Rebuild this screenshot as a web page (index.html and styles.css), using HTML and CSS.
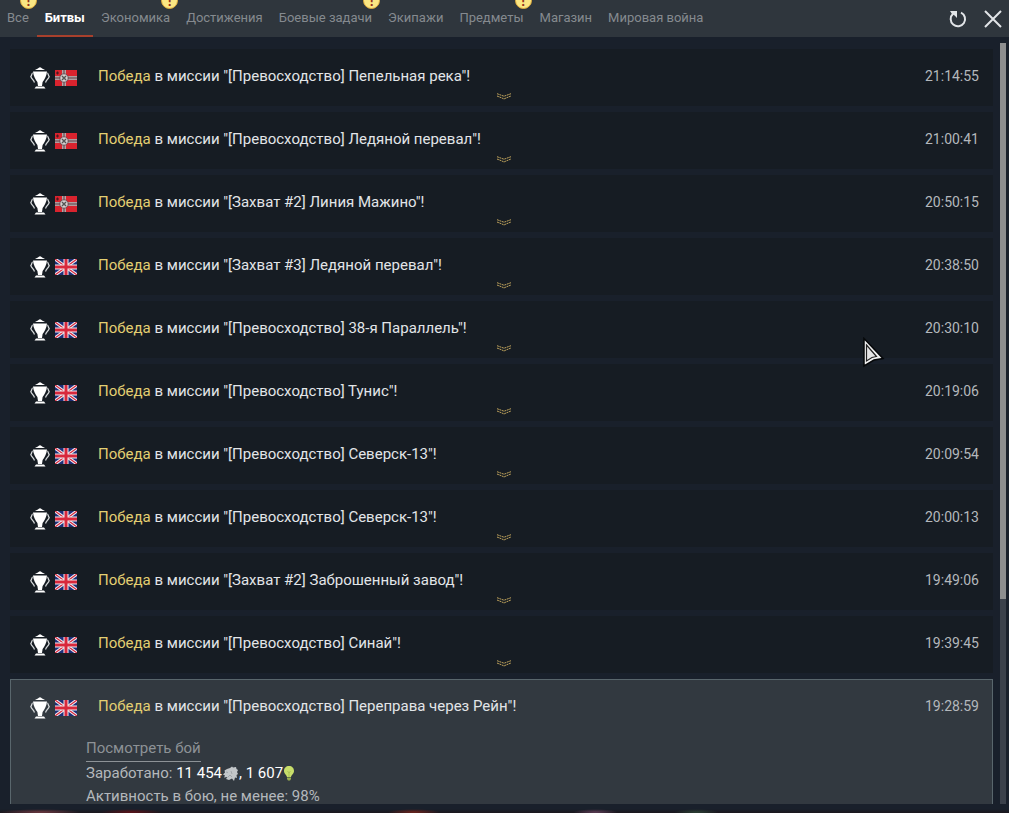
FILE: index.html
```
<!DOCTYPE html>
<html lang="ru">
<head>
  <meta charset="UTF-8">
  <title>Уведомления</title>
  <link rel="stylesheet" href="styles.css">
</head>
<body>
  <svg class="sprite" aria-hidden="true">
    <symbol id="cup" viewBox="0 0 20 22">
      <path fill="#fff" d="M5 3C6 2.200 8 2 8.500 1Q10-.5 11.500 1C12 2 14 2.200 15 3zM3 4.500H17C16.600 9 14.500 12.500 12.600 15L12 19H8L7.400 15C5.500 12.500 3.400 9 3 4.500zM6 19.500H14L15.500 21.500H4.500z"/>
      <path fill="none" stroke="#d5d8da" stroke-width="1.200" d="M2.800 6C1.600 6 2 8.500 .8 9.500C1.500 12.500 3.500 12 4.500 15.500M17.200 6C18.400 6 18 8.500 19.200 9.500C18.500 12.500 16.500 12 15.500 15.500"/>
    </symbol>
    <symbol id="de" viewBox="0 0 22 16">
      <path fill="#d9232e" d="M0 0H22V16H0z"/>
      <path stroke="#cdbfc1" stroke-width="4" d="M0 8H22M9 0V16"/>
      <path stroke="#5a3c42" stroke-width="2.400" d="M0 8H22M9 0V16"/>
      <path stroke="#cdbfc1" stroke-width=".8" d="M0 8H22M9 0V16"/>
      <circle cx="9" cy="8" r="4.200" fill="#d6d0d1" stroke="#5a3c42" stroke-width=".8"/>
      <path stroke="#555" stroke-width="1.400" d="M7 6L11 10M11 6L7 10"/>
      <path stroke="#4a1a20" stroke-width="1.200" d="M1 3H4M2.500 1.500V4.500"/>
    </symbol>
    <symbol id="gb" viewBox="0 0 22 16">
      <path fill="#1c2e78" d="M0 0H22V16H0z"/>
      <path stroke="#f0eef2" stroke-width="3.200" d="M0 0L22 16M22 0L0 16"/>
      <path stroke="#d8283c" stroke-width="1.200" d="M0 0L22 16M22 0L0 16"/>
      <path stroke="#f0eef2" stroke-width="5" d="M11 0V16M0 8H22"/>
      <path stroke="#d8283c" stroke-width="3" d="M11 0V16M0 8H22"/>
    </symbol>
    <symbol id="more" viewBox="0 0 14 7">
      <path fill="none" stroke="#c0a45c" stroke-dasharray="2 .6" d="M0 .7L5 2.500L7 3.200L9 2.500L14 .7M0 3L5 5L7 6L9 5L14 3"/>
    </symbol>
  </svg>

  <header class="topbar">
    <nav class="tabs">
      <button class="tab">Все<span class="badge">!</span></button>
      <button class="tab active">Битвы</button>
      <button class="tab">Экономика<span class="badge">!</span></button>
      <button class="tab">Достижения</button>
      <button class="tab">Боевые задачи<span class="badge">!</span></button>
      <button class="tab">Экипажи</button>
      <button class="tab">Предметы<span class="badge">!</span></button>
      <button class="tab">Магазин</button>
      <button class="tab">Мировая война</button>
    </nav>
    <div class="tools">
      <button aria-label="Обновить">
        <svg width="18" height="18" viewBox="0 0 18 18"><path fill="none" stroke="#e2e5e8" stroke-width="2" d="M12 2.600A7.200 7.200 0 1 1 4 3.800"/><path fill="#e2e5e8" d="M1 1H8V8L5.600 5.500L3 4z"/></svg>
      </button>
      <button aria-label="Закрыть">
        <svg width="18" height="18" viewBox="0 0 18 18"><path stroke="#e2e5e8" stroke-width="2" d="M1 1L17 17M17 1L1 17"/></svg>
      </button>
    </div>
  </header>

  <main class="content">
    <div class="list">
      <article class="battle">
        <svg class="cup"><use href="#cup"/></svg><svg class="flag"><use href="#de"/></svg>
        <p class="title"><span class="win">Победа</span> в миссии "[Превосходство] Пепельная река"!</p>
        <time>21:14:55</time>
        <button class="more" aria-label="Развернуть"><svg><use href="#more"/></svg></button>
      </article>
      <article class="battle">
        <svg class="cup"><use href="#cup"/></svg><svg class="flag"><use href="#de"/></svg>
        <p class="title"><span class="win">Победа</span> в миссии "[Превосходство] Ледяной перевал"!</p>
        <time>21:00:41</time>
        <button class="more" aria-label="Развернуть"><svg><use href="#more"/></svg></button>
      </article>
      <article class="battle">
        <svg class="cup"><use href="#cup"/></svg><svg class="flag"><use href="#de"/></svg>
        <p class="title"><span class="win">Победа</span> в миссии "[Захват #2] Линия Мажино"!</p>
        <time>20:50:15</time>
        <button class="more" aria-label="Развернуть"><svg><use href="#more"/></svg></button>
      </article>
      <article class="battle">
        <svg class="cup"><use href="#cup"/></svg><svg class="flag"><use href="#gb"/></svg>
        <p class="title"><span class="win">Победа</span> в миссии "[Захват #3] Ледяной перевал"!</p>
        <time>20:38:50</time>
        <button class="more" aria-label="Развернуть"><svg><use href="#more"/></svg></button>
      </article>
      <article class="battle">
        <svg class="cup"><use href="#cup"/></svg><svg class="flag"><use href="#gb"/></svg>
        <p class="title"><span class="win">Победа</span> в миссии "[Превосходство] 38-я Параллель"!</p>
        <time>20:30:10</time>
        <button class="more" aria-label="Развернуть"><svg><use href="#more"/></svg></button>
      </article>
      <article class="battle">
        <svg class="cup"><use href="#cup"/></svg><svg class="flag"><use href="#gb"/></svg>
        <p class="title"><span class="win">Победа</span> в миссии "[Превосходство] Тунис"!</p>
        <time>20:19:06</time>
        <button class="more" aria-label="Развернуть"><svg><use href="#more"/></svg></button>
      </article>
      <article class="battle">
        <svg class="cup"><use href="#cup"/></svg><svg class="flag"><use href="#gb"/></svg>
        <p class="title"><span class="win">Победа</span> в миссии "[Превосходство] Северск-13"!</p>
        <time>20:09:54</time>
        <button class="more" aria-label="Развернуть"><svg><use href="#more"/></svg></button>
      </article>
      <article class="battle">
        <svg class="cup"><use href="#cup"/></svg><svg class="flag"><use href="#gb"/></svg>
        <p class="title"><span class="win">Победа</span> в миссии "[Превосходство] Северск-13"!</p>
        <time>20:00:13</time>
        <button class="more" aria-label="Развернуть"><svg><use href="#more"/></svg></button>
      </article>
      <article class="battle">
        <svg class="cup"><use href="#cup"/></svg><svg class="flag"><use href="#gb"/></svg>
        <p class="title"><span class="win">Победа</span> в миссии "[Захват #2] Заброшенный завод"!</p>
        <time>19:49:06</time>
        <button class="more" aria-label="Развернуть"><svg><use href="#more"/></svg></button>
      </article>
      <article class="battle">
        <svg class="cup"><use href="#cup"/></svg><svg class="flag"><use href="#gb"/></svg>
        <p class="title"><span class="win">Победа</span> в миссии "[Превосходство] Синай"!</p>
        <time>19:39:45</time>
        <button class="more" aria-label="Развернуть"><svg><use href="#more"/></svg></button>
      </article>
      <article class="battle open">
        <svg class="cup"><use href="#cup"/></svg><svg class="flag"><use href="#gb"/></svg>
        <p class="title"><span class="win">Победа</span> в миссии "[Превосходство] Переправа через Рейн"!</p>
        <time>19:28:59</time>
        <div class="details">
          <a href="#replay">Посмотреть бой</a>
          <p>Заработано: <b>11 454<svg class="lion" viewBox="0 0 15 15"><path fill="#c3c7ca" d="M4 3L7 2L9 .5L10 1.500L13 1L13.500 3L15 4L14 6L15 8L13.500 9L14 12L12 11.500L11 15L9 12.500L6 14L3 13L4.500 11L1 11.500L2 9.500L0 8.500L2 6.500L1.500 4.500z"/><path fill="none" stroke="#8b9095" stroke-width=".6" d="M3 6L5 6.500M5 11L7 9L9 11M8 5L9 8"/></svg>, 1 607<svg class="bulb" viewBox="0 0 10 15"><path fill="#c8de6a" d="M5 0C8 0 10 2 10 5C10 8 7.500 8.500 7 11H3C2.500 8.500 0 8 0 5C0 2 2 0 5 0z"/><path fill="#9aae4e" d="M3 11.500H7V13L6 14.500H4L3 13z"/><path fill="none" stroke="#a5ba50" stroke-width=".8" d="M3.500 5L5 7L6.500 5M5 7V11"/></svg></b></p>
          <p>Активность в бою, не менее: 98%</p>
        </div>
      </article>
    </div>
    <div class="scrollbar"><div class="thumb"></div></div>
  </main>

  <footer class="backdrop"></footer>

  <svg class="cursor" viewBox="0 0 22 31"><path fill="#f2f2f2" stroke="#050709" stroke-width="1.500" d="M1 1.500L20 21.500L11 23L1 29z"/><path fill="#e4e4e4" stroke="#222" stroke-width="1.200" d="M3.500 8L13.500 19.500L9 20.500L3.500 24z"/></svg>
</body>
</html>
```
FILE: styles.css
```
* { box-sizing: border-box; margin: 0; padding: 0 }
html, body { height: 100% }
body {
  display: flex;
  flex-direction: column;
  overflow: hidden;
  background: #19202b;
  color: #e2e5e8;
  font-family: Roboto, sans-serif;
  font-size: 15px;
}
button {
  border: none;
  background: none;
  color: inherit;
  font: inherit;
  cursor: pointer;
}
.sprite { display: none }

.topbar {
  display: flex;
  justify-content: space-between;
  flex: none;
  height: 37px;
  background: #2f363d;
}
.tabs { display: flex }
.tab {
  position: relative;
  padding: 0 8px;
  border-bottom: 2px solid transparent;
  color: #858a8f;
  font-size: 13px;
  white-space: nowrap;
}
.tab:first-child { padding-left: 7px }
.tab.active {
  border-color: #a8402c;
  color: #fff;
  font-weight: 700;
}
.badge {
  position: absolute;
  top: -8px;
  right: 0;
  width: 17px;
  height: 17px;
  border: 1px solid #e0ac3c;
  border-radius: 50%;
  background: #fbe783;
  color: #94301a;
  font-size: 14px;
  font-weight: 700;
  line-height: 17px;
}
.tools {
  display: flex;
  align-items: center;
  gap: 17px;
  padding-right: 7px;
}
.tools svg { display: block }

.content {
  display: flex;
  flex: 1;
  gap: 7px;
  min-height: 0;
  padding: 0 3px 0 10px;
}
.list {
  display: flex;
  flex: 1;
  flex-direction: column;
  gap: 6px;
  overflow: hidden;
  padding-top: 12px;
}
.battle {
  position: relative;
  display: flex;
  flex-wrap: wrap;
  flex: none;
  align-content: flex-start;
  align-items: flex-start;
  height: 57px;
  padding: 15px 14px 0 20px;
  background: #161c23;
}
.cup {
  width: 20px;
  height: 22px;
  margin-top: 3px;
}
.flag {
  width: 22px;
  height: 16px;
  margin: 6px 21px 0 5px;
}
.title {
  flex: 1;
  line-height: 24px;
}
.win { color: #e3cf72 }
time {
  color: #b4b8bc;
  font-size: 14px;
  line-height: 25px;
}
.more {
  position: absolute;
  bottom: 6px;
  left: 50%;
  width: 14px;
  height: 7px;
  margin-left: -5px;
}
.more svg {
  display: block;
  width: 14px;
  height: 7px;
}
.battle.open {
  height: 160px;
  padding: 14px 13px 0 19px;
  border: 1px solid #59666c;
  background: #323940;
}
.details {
  width: 100%;
  margin-top: 17px;
  padding: 0 56px;
  color: #b4b8bc;
  line-height: 23px;
}
.details a {
  display: block;
  width: fit-content;
  border-bottom: 1px solid #8d9296;
  color: #8d9296;
  line-height: 25px;
  text-decoration: none;
}
.details b {
  color: #fff;
  font-weight: 400;
}
.lion, .bulb {
  height: 15px;
  margin: 0 1px;
  vertical-align: -3px;
}
.lion { width: 15px }
.bulb { width: 10px }

.scrollbar {
  width: 6px;
  margin-top: 6px;
  background: #3b414b;
}
.thumb {
  height: 73%;
  background: #8d8e8f;
}

/* strip of the hangar showing below the window */
.backdrop {
  flex: none;
  height: 9px;
  background:
    radial-gradient(30px 3px at 13% 90%, #5c1218, transparent),
    radial-gradient(26px 3px at 41% 90%, #6d241d, transparent),
    radial-gradient(22px 3px at 59% 90%, #5c3c54, transparent),
    radial-gradient(22px 3px at 69% 90%, #2c4034, transparent),
    radial-gradient(40px 3px at 4% 90%, #6c3840, transparent),
    linear-gradient(#19202b 5px, #1b161d);
}
.cursor {
  position: absolute;
  top: 337px;
  left: 863px;
  width: 22px;
  height: 31px;
}
```
